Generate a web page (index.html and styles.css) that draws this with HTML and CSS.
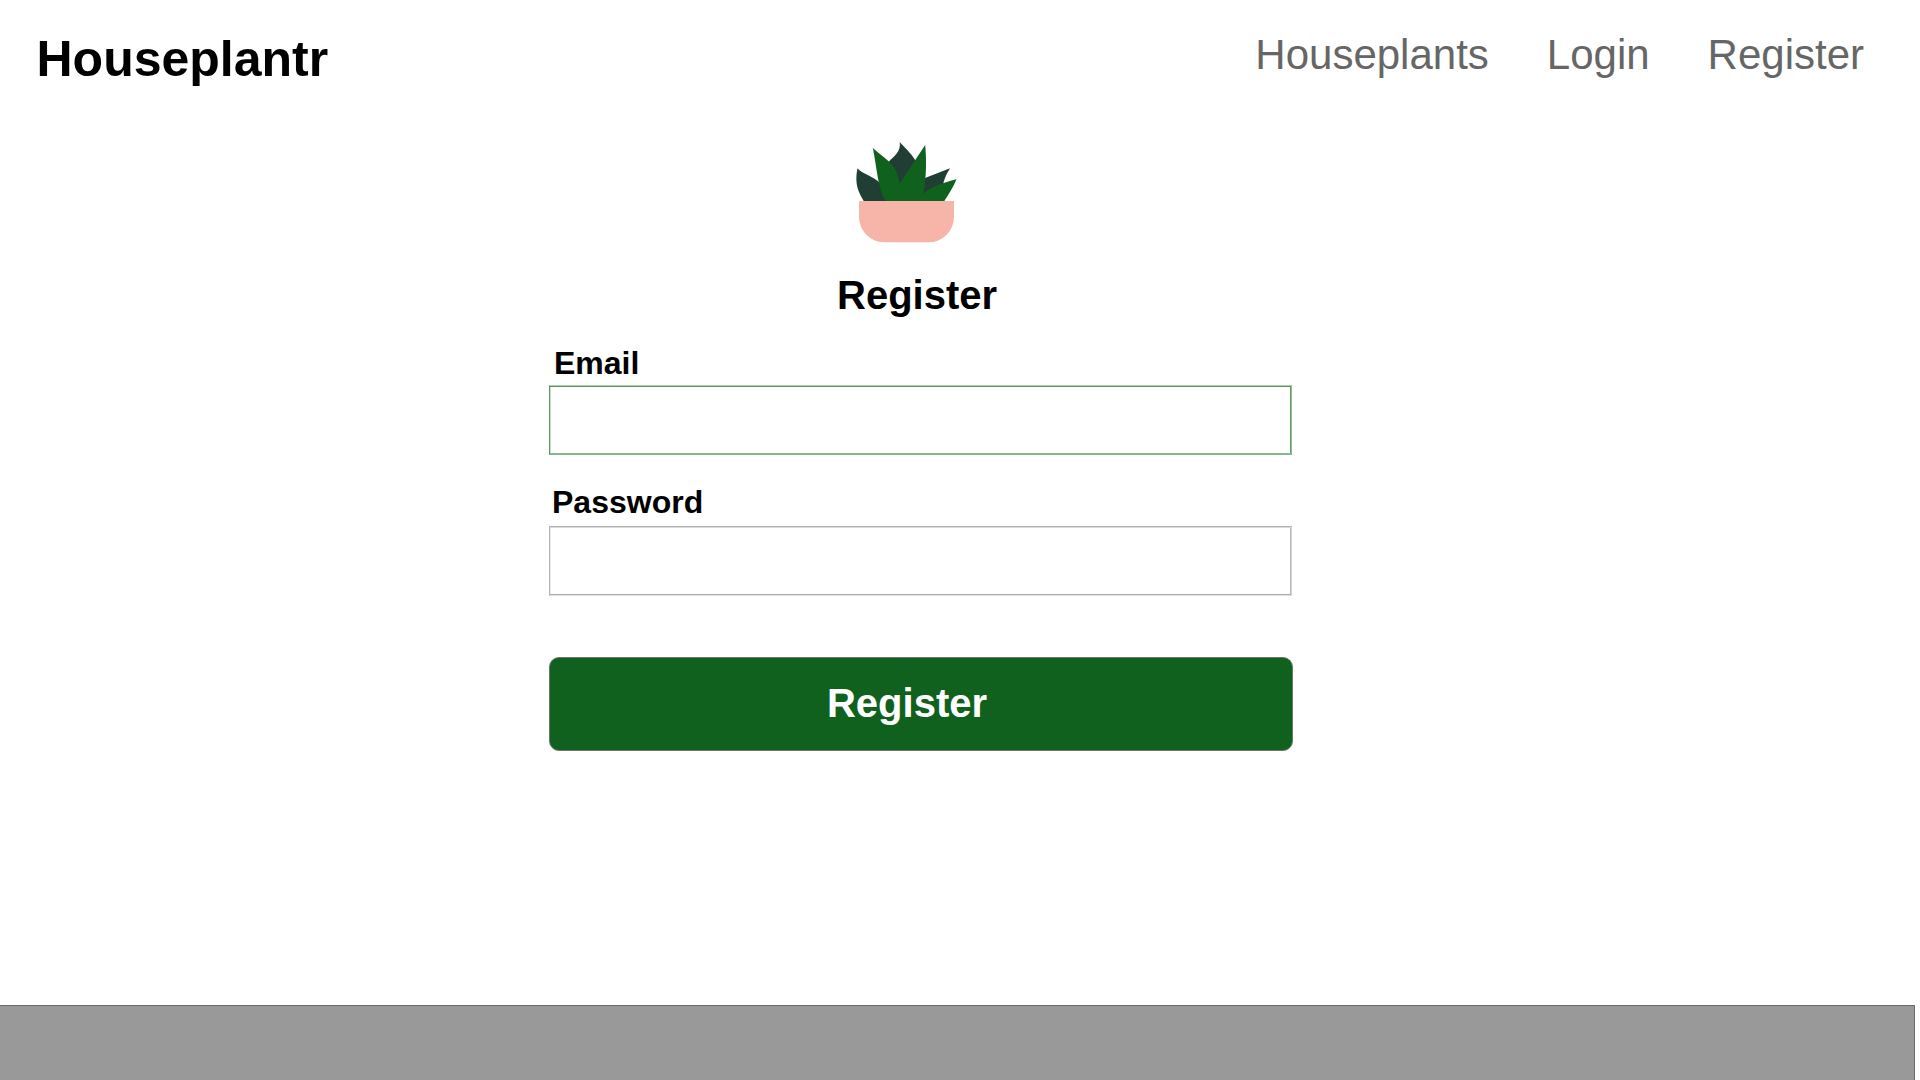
FILE: index.html
```html
<!DOCTYPE html>
<html lang="en">
<head>
<meta charset="utf-8">
<title>Houseplantr</title>
<link rel="stylesheet" href="styles.css">
</head>
<body>
<header class="header">
  <div class="brand">Houseplantr</div>
  <nav class="nav">
    <a>Houseplants</a>
    <a>Login</a>
    <a>Register</a>
  </nav>
</header>
<main class="main">
  <svg class="logo" viewBox="0 0 130 125" width="130" height="125">
    <g fill="#203e33">
      <path d="M24 71.500C19 63 14 55 17.500 38.300C22 44 33 46 40 53L48 71.500Z"/>
      <path d="M48.500 32C54 26 61 22 59.800 12C64 17 70 22 74.800 29.500L78 34L60 56L50 40Z"/>
      <path d="M80 50L85 48L110 38.300C108 42 105 46 103 55L80 66Z"/>
    </g>
    <path fill="#0f611d" d="M46 71.500C38 60 37 38 32.800 18C39 24 53 32 57 43C59 48 58.500 51 60 53L85.200 15C86.500 30 86.500 45 83.500 63.500C92 56 103 53 116.500 49.300C113 58 108 65 104 71.500Z"/>
    <path fill="#f7b5a9" d="M19 71H114V87A25.500 25.500 0 0 1 88.500 112.300H44.500A25.500 25.500 0 0 1 19 87Z"/>
  </svg>
  <h1 class="title">Register</h1>
  <form class="form">
    <label class="label label-email" for="email">Email</label>
    <input class="field field-active" id="email" type="email">
    <label class="label label-password" for="password">Password</label>
    <input class="field" id="password" type="password">
    <button class="submit" type="button">Register</button>
  </form>
</main>
<footer class="footer"></footer>
</body>
</html>
```
FILE: styles.css
```css
* { box-sizing: border-box; }
body {
  margin: 0;
  height: 1080px;
  display: flex;
  flex-direction: column;
  overflow: hidden;
  background: #fff;
  color: #000;
  font-family: Arial, "Liberation Sans", sans-serif;
}
.header {
  display: flex;
  justify-content: space-between;
  height: 130px;
  padding: 30px 56px 0 36.500px;
}
.brand { font-size: 50px; font-weight: 700; line-height: 58px; }
.nav {
  display: flex;
  gap: 58px;
  color: #666;
  font-size: 42px;
  line-height: 50px;
}
.main {
  flex: 1;
  display: flex;
  flex-direction: column;
  align-items: flex-start;
}
.logo { display: block; margin-left: 840px; }
.title {
  margin: 17px 0 0 837px;
  font-size: 40px;
  line-height: 46px;
}
.form {
  display: flex;
  flex-direction: column;
  width: 744px;
  margin-left: 549px;
}
.label { font-size: 32px; font-weight: 700; line-height: 36px; }
.label-email { margin: 27px 0 4px 5px; }
.label-password { margin: 29px 0 6px 3px; }
.field {
  width: 743px;
  height: 70px;
  padding: 0 16px;
  border: 1px solid;
  border-color: #b3b3b3 #d0d0d0 #e0e0e0 #b3b3b3;
  outline: none;
  background: #fff;
  box-shadow: inset 0 1px #d9d9d9, inset 0 -1px #acacac, inset -1px 0 #bcbcbc, inset 1px 0 #ececec;
  font: inherit;
  font-size: 32px;
}
.field-active {
  border-color: #b4d0b8 #93bc99 #84b28c #5d9668;
  box-shadow: inset 0 1px #5a9465, inset 0 -1px #8fb896, inset -1px 0 #639b6e, inset 1px 0 #c9dccc;
}
.submit {
  width: 744px;
  height: 94px;
  margin-top: 61px;
  padding: 0 28px 2px 0;
  border: 1px solid #6d756d;
  border-radius: 10px;
  background: #0f611d;
  color: #fff;
  font-family: inherit;
  font-size: 40px;
  font-weight: 700;
}
.footer {
  width: 1915px;
  height: 75px;
  border: solid #6b6b6b;
  border-width: 1px 1px 0 0;
  background: #999;
}
```
